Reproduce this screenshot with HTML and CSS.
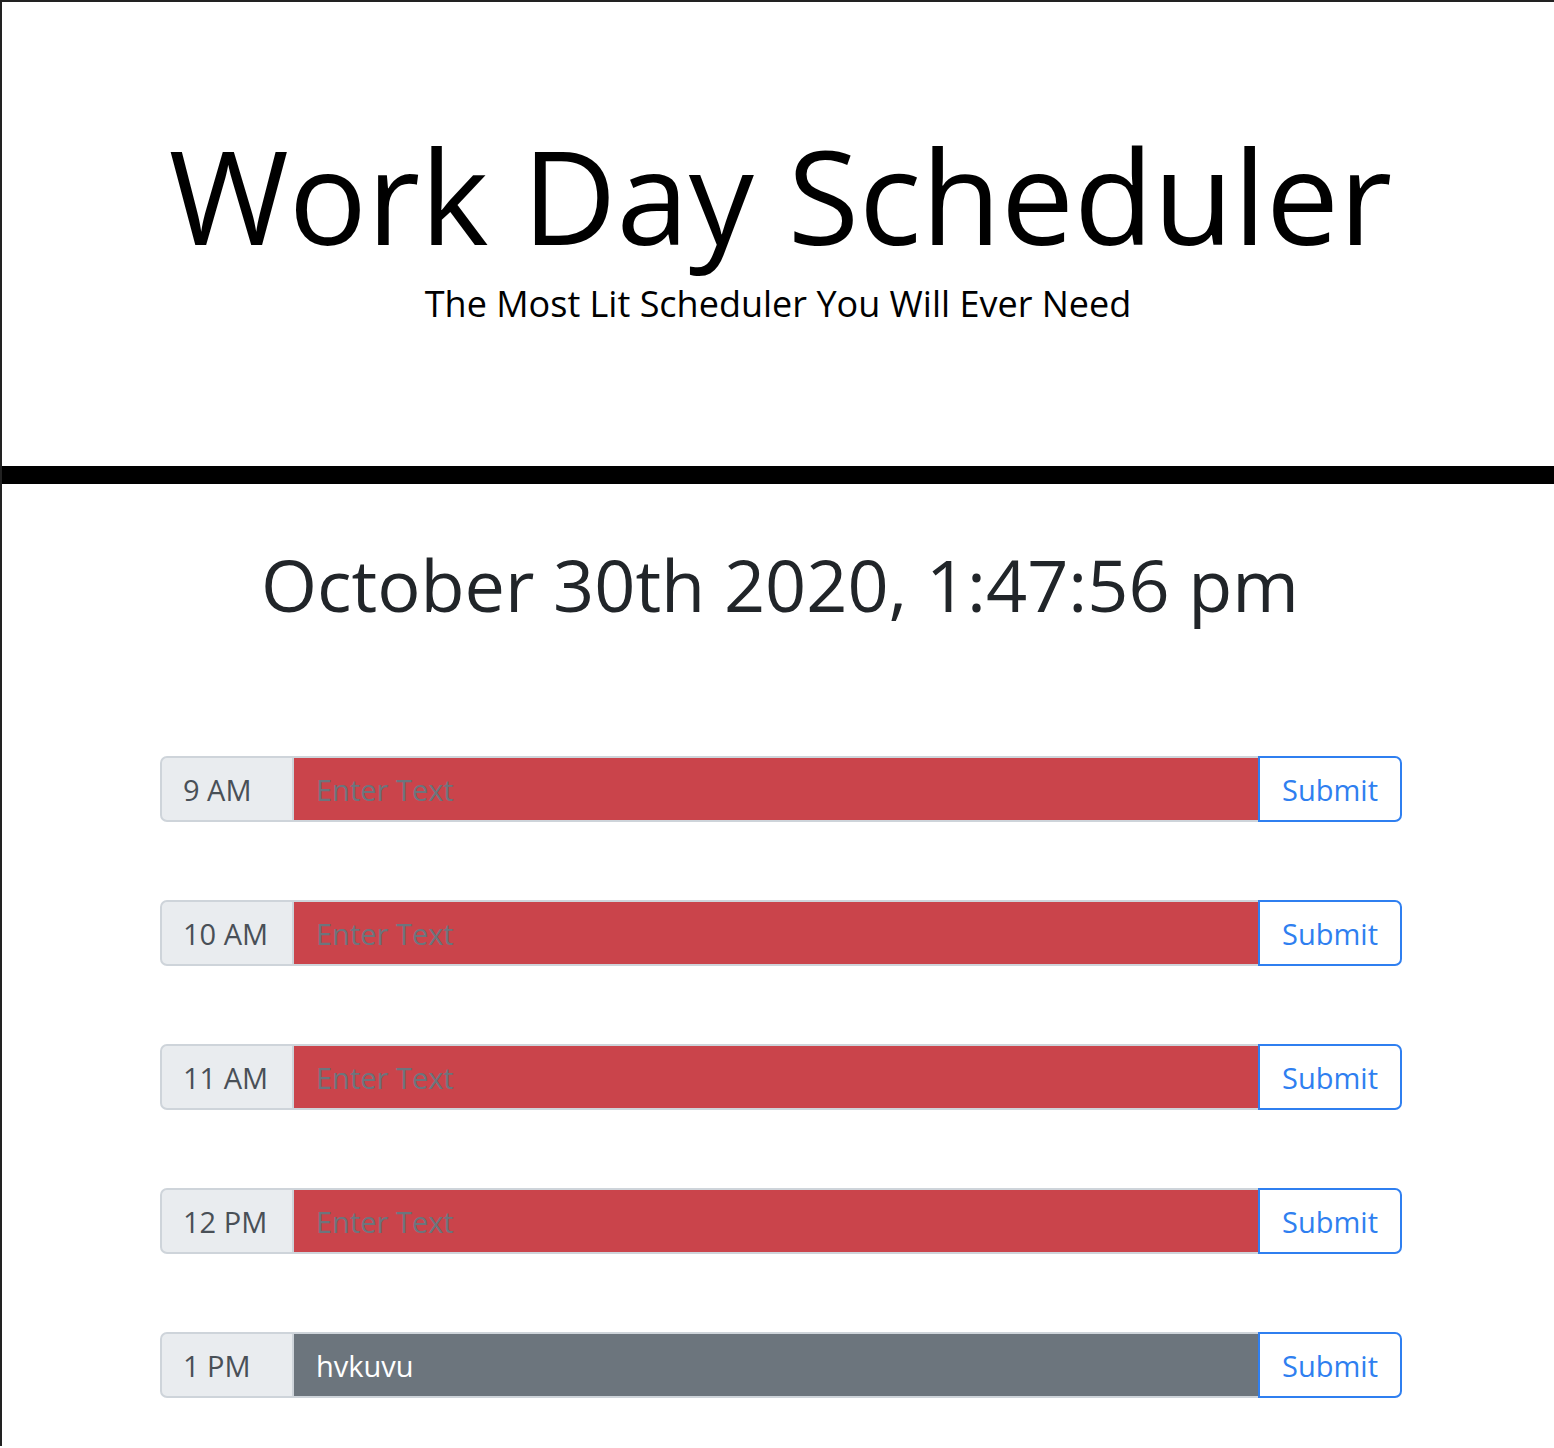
FILE: index.html
```html
<!DOCTYPE html>
<html lang="en">
<head>
<meta charset="utf-8">
<title>Work Day Scheduler</title>
<link rel="stylesheet" href="styles.css">
</head>
<body>
<div class="frame">
  <header class="jumbo">
    <h1 class="title">Work Day Scheduler</h1>
    <p class="lead">The Most Lit Scheduler You Will Ever Need</p>
  </header>
  <main class="main">
    <p class="date">October 30th 2020, 1:47:56 pm</p>
    <div class="rows">
      <div class="row">
        <span class="hour">9 AM</span>
        <input class="task past" type="text" placeholder="Enter Text">
        <button class="submit">Submit</button>
      </div>
      <div class="row">
        <span class="hour">10 AM</span>
        <input class="task past" type="text" placeholder="Enter Text">
        <button class="submit">Submit</button>
      </div>
      <div class="row">
        <span class="hour">11 AM</span>
        <input class="task past" type="text" placeholder="Enter Text">
        <button class="submit">Submit</button>
      </div>
      <div class="row">
        <span class="hour">12 PM</span>
        <input class="task past" type="text" placeholder="Enter Text">
        <button class="submit">Submit</button>
      </div>
      <div class="row">
        <span class="hour">1 PM</span>
        <input class="task present" type="text" placeholder="Enter Text" value="hvkuvu">
        <button class="submit">Submit</button>
      </div>
    </div>
  </main>
</div>
</body>
</html>
```
FILE: styles.css
```css
html, body {
  margin: 0;
  padding: 0;
  background: #fff;
}
body {
  font-family: "Open Sans", "Liberation Sans", sans-serif;
  color: #212529;
  height: 1448px;
  overflow: hidden;
}
.frame {
  border-top: 2px solid #222;
  border-left: 2px solid #222;
  min-height: 1446px;
  box-sizing: border-box;
}
.jumbo {
  box-sizing: content-box;
  padding-top: 121px;
  height: 343px;
  border-bottom: 18px solid #000;
  text-align: center;
  color: #000;
}
.title {
  margin: 0;
  font-weight: 400;
  font-size: 130px;
  line-height: 1.1;
  padding-left: 5px;
}
.lead {
  margin: 16px 0 0;
  font-size: 36px;
  line-height: 1.2;
}
.main {
  padding-top: 57px;
}
.date {
  margin: 0;
  text-align: center;
  font-size: 72px;
  line-height: 1.2;
  padding-left: 4px;
}
.rows {
  margin: 129px 0 0 158px;
  width: 1242px;
  display: flex;
  flex-direction: column;
  gap: 78px;
}
.row {
  display: flex;
  height: 66px;
}
.hour {
  box-sizing: border-box;
  width: 133px;
  flex: none;
  display: flex;
  align-items: center;
  padding: 0 21px;
  font-size: 29px;
  color: #495057;
  background: #e9ecef;
  border: 2px solid #ced4da;
  border-right-width: 1px;
  border-radius: 7px 0 0 7px;
}
.task {
  flex: 1;
  min-width: 0;
  box-sizing: border-box;
  height: 66px;
  margin: 0;
  padding: 0 22px;
  font-family: inherit;
  font-size: 29px;
  border: 2px solid #ced4da;
  border-left: 1px solid #ced4da;
  border-right: 0;
  outline: none;
}
.task::placeholder {
  color: #6c757d;
  opacity: 1;
}
.past {
  background: #ca444b;
}
.present {
  background: #6c757d;
  color: #fff;
}
.submit {
  flex: none;
  box-sizing: border-box;
  width: 144px;
  height: 66px;
  margin: 0;
  padding: 0;
  font-family: inherit;
  font-size: 29px;
  color: #2f7ff0;
  background: #fff;
  border: 2px solid #2f7ff0;
  border-radius: 0 7px 7px 0;
  cursor: pointer;
}
```
